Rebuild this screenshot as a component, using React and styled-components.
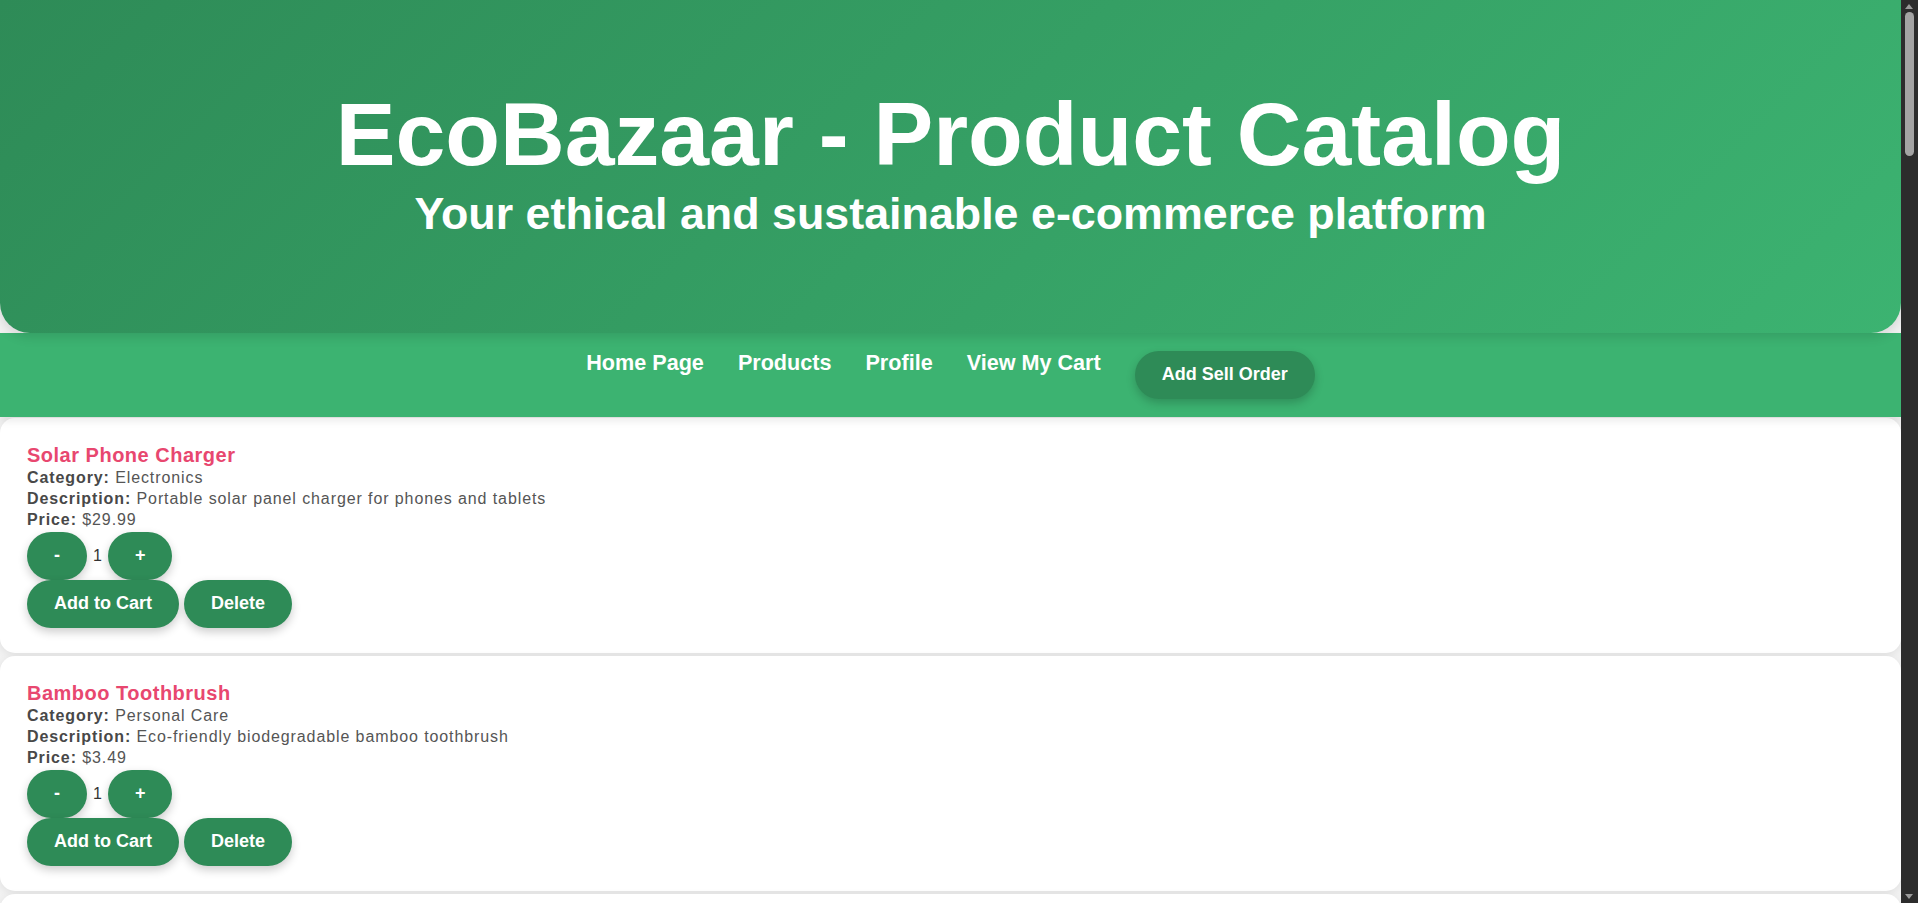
import React, { useState } from "react";
import styled, { createGlobalStyle } from "styled-components";

const GlobalStyle = createGlobalStyle`
  body {
    margin: 0;
    background: #f2f2f2;
    color: #555;
    font-family: "Liberation Sans", Arial, sans-serif;
  }
`;

const Page = styled.div`
  margin-right: 17px;
`;

// fake classic scrollbar, the reference shows the browser's dark one
const ScrollTrack = styled.div`
  position: fixed;
  top: 0;
  right: 0;
  width: 17px;
  height: 100vh;
  background: #2c2c2c;
  z-index: 10;
`;

const ScrollArrow = styled.div`
  position: absolute;
  left: 4px;
  ${(p) => (p.$down ? "bottom: 4px;" : "top: 4px;")}
  width: 0;
  height: 0;
  border-left: 4.5px solid transparent;
  border-right: 4.5px solid transparent;
  ${(p) =>
    p.$down ? "border-top: 5px solid #9a9a9a;" : "border-bottom: 5px solid #9a9a9a;"}
`;

const ScrollThumb = styled.div`
  position: absolute;
  top: 12px;
  left: 4px;
  width: 9px;
  height: 144px;
  border-radius: 5px;
  background: #a3a3a3;
`;

const Header = styled.header`
  background: linear-gradient(135deg, #2e8b57 0%, #3cb371 100%);
  color: #fff;
  text-align: center;
  padding: 83px 20px 93px;
  border-radius: 0 0 30px 30px;
  box-shadow: 0 4px 12px rgba(0, 0, 0, 0.12);
  position: relative;
  z-index: 2;
`;

const Title = styled.h1`
  margin: 0;
  font-size: 89.6px;
  font-weight: 700;
  line-height: 1.15;
`;

const Subtitle = styled.h2`
  margin: 2px 0 0;
  font-size: 44.8px;
  font-weight: 700;
  line-height: 1.15;
`;

const Nav = styled.nav`
  background: #3cb371;
  display: flex;
  justify-content: center;
  align-items: flex-start;
  gap: 34px;
  padding: 18px 20px;
  box-shadow: 0 4px 8px rgba(0, 0, 0, 0.08);
  position: relative;
  z-index: 1;
`;

const NavLink = styled.a`
  color: #fff;
  font-size: 21.6px;
  font-weight: 700;
  text-decoration: none;
  line-height: 1.15;
  cursor: pointer;
`;

const Button = styled.button`
  font-family: "Liberation Sans", Arial, sans-serif;
  background: #2e8b57;
  color: #fff;
  border: none;
  border-radius: 24px;
  height: 48px;
  padding: 0 27px;
  font-size: 18px;
  font-weight: 700;
  box-shadow: 0 4px 10px rgba(0, 0, 0, 0.2);
  cursor: pointer;
`;

const List = styled.main`
  display: flex;
  flex-direction: column;
  gap: 3px;
  padding-top: 1px;
`;

const Card = styled.section`
  background: #fff;
  border-radius: 15px;
  padding: 26px 27px 25px;
  box-shadow: 0 2px 8px rgba(0, 0, 0, 0.08);
`;

const ProductName = styled.h3`
  margin: 0;
  color: #e8476f;
  font-size: 20px;
  font-weight: 700;
  line-height: 23px;
  letter-spacing: 0.5px;
`;

const Line = styled.p`
  margin: 0;
  font-size: 16px;
  line-height: 21px;
  letter-spacing: 0.9px;
  color: #555;

  strong {
    color: #484848;
  }
`;

const Row = styled.div`
  display: flex;
  align-items: center;
  gap: ${(p) => p.$gap || 0}px;
  margin-top: ${(p) => p.$top || 0}px;
`;

const Qty = styled.span`
  font-size: 16px;
  color: #333;
  margin: 0 6px;
`;

const products = [
  ["Solar Phone Charger", "Electronics", "Portable solar panel charger for phones and tablets", "29.99"],
  ["Bamboo Toothbrush", "Personal Care", "Eco-friendly biodegradable bamboo toothbrush", "3.49"],
  ["Reusable Water Bottle", "Kitchen", "Stainless steel insulated bottle, BPA free", "18.99"],
  ["Organic Cotton Tote Bag", "Accessories", "Durable tote bag made from organic cotton", "12.50"],
  ["Beeswax Food Wraps", "Kitchen", "Reusable alternative to plastic cling film", "14.99"],
  ["Compostable Phone Case", "Electronics", "Plant-based phone case that fully composts", "24.00"],
  ["Recycled Notebook", "Stationery", "Notebook made from 100% recycled paper", "6.75"],
  ["LED Bulb Pack", "Home", "Energy saving LED bulbs, pack of four", "15.99"],
  ["Natural Loofah Sponge", "Personal Care", "Biodegradable plant-based kitchen sponge", "4.25"],
  ["Hemp Backpack", "Accessories", "Lightweight backpack woven from hemp fibre", "45.00"],
  ["Wooden Cutlery Set", "Kitchen", "Travel cutlery set made from bamboo", "9.99"],
  ["Solar Garden Lights", "Home", "Set of six solar-powered garden lights", "32.49"],
  ["Shampoo Bar", "Personal Care", "Plastic-free solid shampoo bar", "8.50"],
  ["Recycled Glass Vase", "Home", "Hand-blown vase from recycled glass", "27.00"],
  ["Organic Yoga Mat", "Fitness", "Natural rubber yoga mat with cotton strap", "54.99"],
  ["Cork Coasters", "Home", "Set of four natural cork coasters", "7.99"],
  ["Stainless Steel Straws", "Kitchen", "Reusable straws with cleaning brush", "5.99"],
  ["Bamboo Sunglasses", "Accessories", "Polarised sunglasses with bamboo frame", "39.00"],
  ["Wool Dryer Balls", "Home", "Natural alternative to dryer sheets", "11.99"],
  ["Seed Paper Cards", "Stationery", "Greeting cards that grow into wildflowers", "10.50"],
  ["Eco Laundry Detergent", "Home", "Plant-based concentrated laundry sheets", "13.25"],
];

const ProductCard = ({ name, category, description, price }) => {
  const [qty, setQty] = useState(1);
  return (
    <Card>
      <ProductName>{name}</ProductName>
      <Line>
        <strong>Category:</strong> {category}
      </Line>
      <Line>
        <strong>Description:</strong> {description}
      </Line>
      <Line>
        <strong>Price:</strong> ${price}
      </Line>
      <Row $top={2}>
        <Button onClick={() => setQty(Math.max(1, qty - 1))}>-</Button>
        <Qty>{qty}</Qty>
        <Button onClick={() => setQty(qty + 1)}>+</Button>
      </Row>
      <Row $gap={5}>
        <Button>Add to Cart</Button>
        <Button>Delete</Button>
      </Row>
    </Card>
  );
};

const App = () => (
  <>
    <GlobalStyle />
    <Page>
      <Header>
        <Title>EcoBazaar - Product Catalog</Title>
        <Subtitle>Your ethical and sustainable e-commerce platform</Subtitle>
      </Header>
      <Nav>
        <NavLink>Home Page</NavLink>
        <NavLink>Products</NavLink>
        <NavLink>Profile</NavLink>
        <NavLink>View My Cart</NavLink>
        <Button>Add Sell Order</Button>
      </Nav>
      <List>
        {products.map(([name, category, description, price]) => (
          <ProductCard
            key={name}
            name={name}
            category={category}
            description={description}
            price={price}
          />
        ))}
      </List>
    </Page>
    <ScrollTrack>
      <ScrollArrow />
      <ScrollThumb />
      <ScrollArrow $down />
    </ScrollTrack>
  </>
);

export default App;
